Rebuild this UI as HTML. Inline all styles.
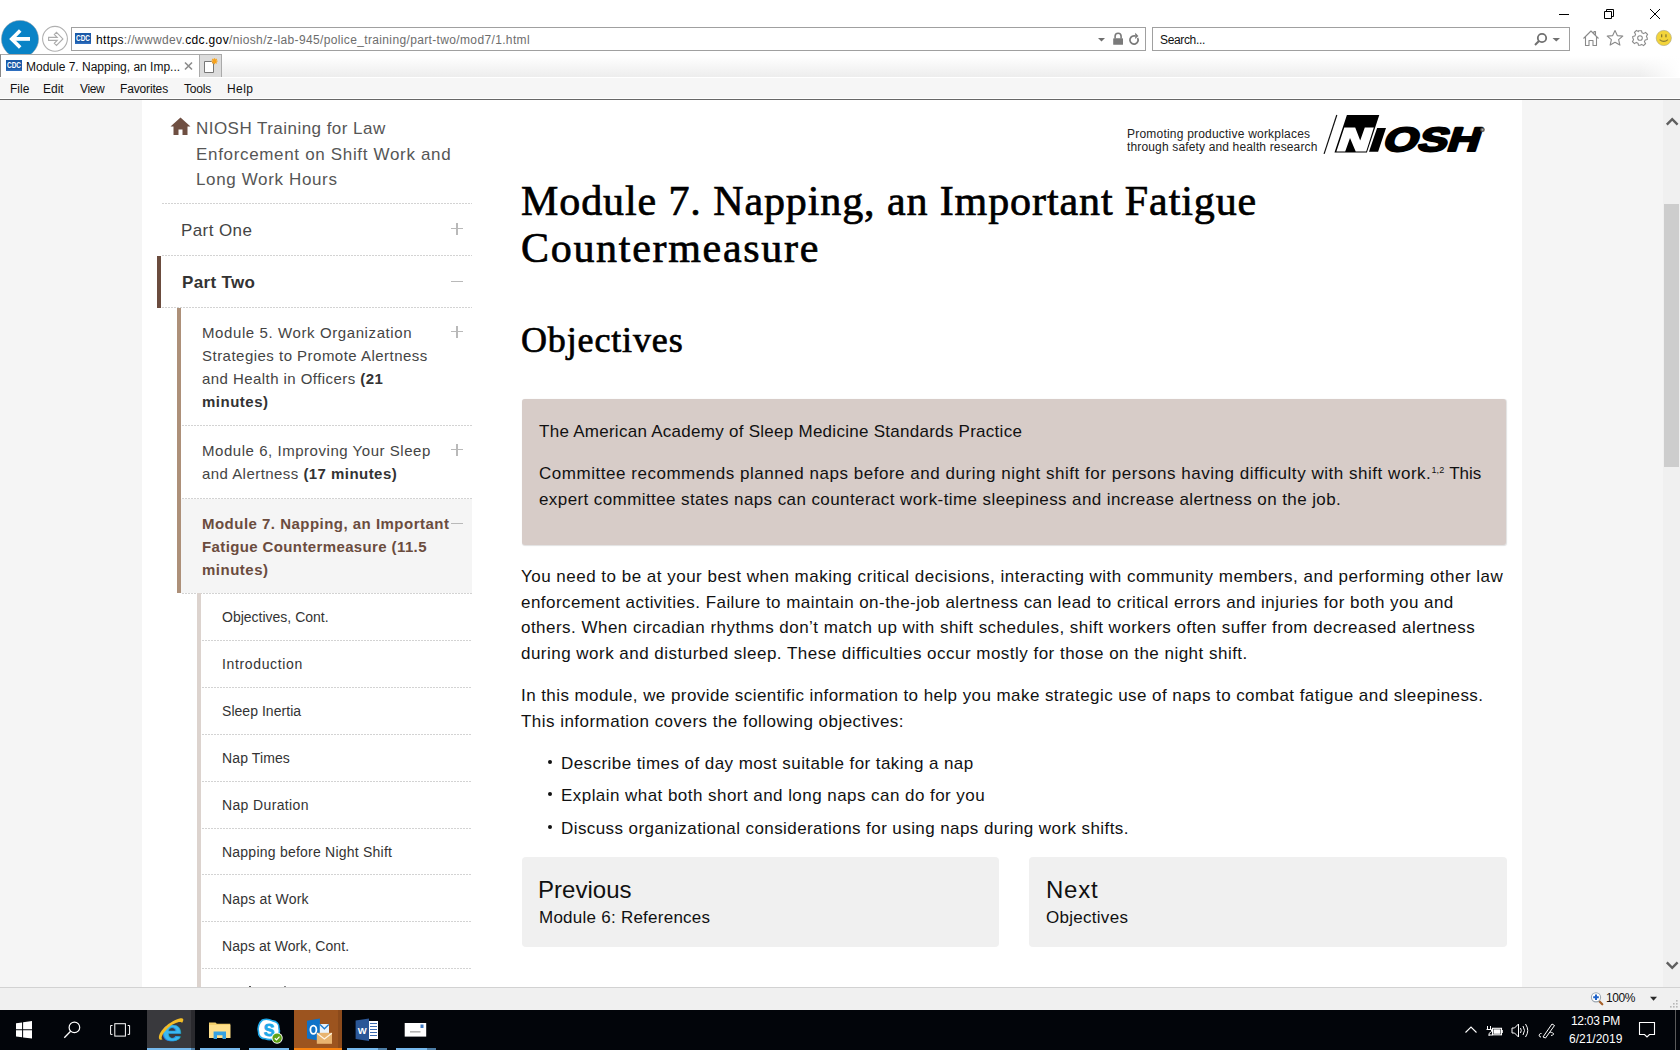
<!DOCTYPE html>
<html><head><meta charset="utf-8">
<style>
*{margin:0;padding:0;box-sizing:border-box}
html,body{width:1680px;height:1050px;overflow:hidden;background:#fff;font-family:"Liberation Sans",sans-serif}
.a{position:absolute}
.nw{white-space:nowrap}
/* chrome */
#top{left:0;top:0;width:1680px;height:55px;background:#fff}
.ui{font-size:12px;color:#000}
#addr{left:71px;top:27px;width:1075px;height:24px;border:1px solid #a0a0a0;background:#fff}
#srch{left:1152px;top:27px;width:418px;height:24px;border:1px solid #a0a0a0;background:#fff}
#tabrow{left:0;top:55px;width:1680px;height:22px;background:linear-gradient(#fff 5%,#ededed)}
#tab{left:0;top:54px;width:200px;height:23px;background:#fff;border:1px solid #aaa;border-bottom:none;border-left-color:#888}
#newtab{left:199px;top:54px;width:23px;height:23px;background:#dcdcdc;border:1px solid #aaa;border-bottom:none}
#menubar{left:0;top:78px;width:1680px;height:20px;background:#f6f6f6}
#menuline{left:0;top:99px;width:1680px;height:1px;background:#676767}
/* page */
#lgray{left:0;top:100px;width:142px;height:887px;background:#f5f5f5}
#rgray{left:1522px;top:100px;width:141px;height:887px;background:#f5f5f5}
#sb{left:1663px;top:100px;width:17px;height:887px;background:#f0f0f0}
#thumb{left:1664px;top:204px;width:15px;height:263px;background:#cdcdcd}
#status{left:0;top:987px;width:1680px;height:23px;background:#f0f0f0;border-top:1px solid #d2d2d2}
#task{left:0;top:1010px;width:1680px;height:40px;background:#02050a}
.t17{font-size:17px;line-height:25.6px}
.t15{font-size:15px;line-height:23px}
.t15 div{height:23px}
.t14{font-size:14px;line-height:20px;color:#333}
.serif{font-family:"Liberation Serif",serif;-webkit-text-stroke:0.7px #000}
.dot{height:1px;background-image:linear-gradient(to right,#d3d3d3 2px,transparent 2px);background-size:3px 1px}
.plus,.minus{width:12px;height:12px}
.plus::before,.minus::before{content:"";position:absolute;left:0;top:5px;width:12px;height:1.3px;background:#b9b9b9}
.plus::after{content:"";position:absolute;left:5.4px;top:0;width:1.3px;height:12px;background:#b9b9b9}
</style></head><body>
<div id="top" class="a"></div>
<div id="addr" class="a"></div>
<div id="srch" class="a"></div>
<div id="tabrow" class="a"></div>
<div class="a" style="left:1640px;top:55px;width:40px;height:22px;background:linear-gradient(to right,rgba(255,255,255,0),#fff)"></div>
<div class="a" style="left:222px;top:77px;width:1458px;height:1px;background:#fff"></div>
<div id="tab" class="a"></div>
<div id="newtab" class="a"></div>
<div id="menubar" class="a"></div>
<div id="menuline" class="a"></div>
<!-- chrome -->
<svg class="a" style="left:0;top:0" width="80" height="54" viewBox="0 0 80 54">
<circle cx="20" cy="39" r="18.6" fill="#0a83c6" stroke="#9aa0a6" stroke-width="0.5"/>
<path d="M13 38.9 H30" stroke="#fff" stroke-width="3.8"/><path d="M20.2 30.4 L11.7 38.9 L20.2 47.4" fill="none" stroke="#fff" stroke-width="3.6" stroke-linejoin="miter" stroke-linecap="butt"/>
<circle cx="55" cy="38.8" r="12.4" fill="#fff" stroke="#b0b0b0" stroke-width="1.1"/>
<path d="M48.6 37.4 H57.2 L54.3 34.5 L56.5 32.3 L62.9 38.9 L56.5 45.5 L54.3 43.3 L57.2 40.4 H48.6 Z" fill="none" stroke="#ababab" stroke-width="1.1" stroke-linejoin="miter"/>
</svg>
<svg class="a" style="left:75px;top:33px" width="17" height="12" viewBox="0 0 17 12"><rect x="0" y="0" width="16" height="11" fill="#1b5aa8"/><rect x="0" y="9.5" width="16" height="1.5" fill="#2f6fbf"/><text x="8" y="8.3" fill="#fff" font-family="Liberation Sans" font-weight="bold" font-size="8.3" text-anchor="middle" textLength="14" lengthAdjust="spacingAndGlyphs">CDC</text></svg>
<div class="a nw ui" style="left:96px;top:32px;line-height:16px;letter-spacing:0.355px;color:#6d6d6d"><span style="color:#000">https</span>://wwwdev.<span style="color:#000">cdc.gov</span>/niosh/z-lab-945/police_training/part-two/mod7/1.html</div>
<svg class="a" style="left:1090px;top:28px" width="56" height="22" viewBox="0 0 56 22">
<path d="M8 10 L15 10 L11.5 13.5 Z" fill="#6e6e6e"/>
<path d="M25.1 10.5 V8.2 A3 3 0 0 1 31.1 8.2 V10.5" fill="none" stroke="#7a7a7a" stroke-width="1.6"/>
<rect x="23.2" y="10.3" width="9.8" height="6.5" rx="0.6" fill="#7a7a7a"/>
<path d="M45 7.9 H44 A4.1 4.1 0 1 0 47.55 9.95" fill="none" stroke="#7a7a7a" stroke-width="1.7"/>
<path d="M45.2 4.7 L48.4 7.9 L45.2 11.1 Z" fill="#7a7a7a"/>
</svg>
<div class="a nw ui" style="left:1160px;top:32px;line-height:16px;letter-spacing:-0.35px;color:#111">Search...</div>
<svg class="a" style="left:1530px;top:28px" width="40" height="22" viewBox="0 0 40 22">
<circle cx="12" cy="10" r="4.2" fill="none" stroke="#707070" stroke-width="1.8"/>
<path d="M9.2 12.8 L5 17" stroke="#707070" stroke-width="2"/>
<path d="M22.5 10 L30 10 L26.3 13.5 Z" fill="#707070"/>
</svg>
<!-- window controls -->
<svg class="a" style="left:1550px;top:0" width="130" height="28" viewBox="0 0 130 28">
<path d="M9 14.5 H19" stroke="#000" stroke-width="1"/>
<path d="M54.5 11.5 H61.5 V18.5 H54.5 Z M56.5 11.5 V9.5 H63.5 V16.5 H61.5" fill="none" stroke="#000" stroke-width="1"/>
<path d="M100 9 L110 19 M110 9 L100 19" stroke="#000" stroke-width="1"/>
</svg>
<svg class="a" style="left:1580px;top:28px" width="100" height="20" viewBox="0 0 100 20">
<path d="M3.5 10.5 L11 3 L18.5 10.5 M5.5 9 V17.5 H9 V12.5 H13 V17.5 H16.5 V9 M14 5.2 V3.5 H15.5 V6.8" fill="none" stroke="#8a8a8a" stroke-width="1.1" stroke-linejoin="round"/>
<path d="M35 2.5 L37.3 7.6 L42.8 8.1 L38.6 11.7 L39.9 17.1 L35 14.3 L30.1 17.1 L31.4 11.7 L27.2 8.1 L32.7 7.6 Z" fill="none" stroke="#8a8a8a" stroke-width="1.1" stroke-linejoin="round"/>
<g transform="translate(60 10)" fill="none" stroke="#8a8a8a" stroke-width="1.1"><circle r="2.3"/><path d="M-1.5 -7.3 H1.5 L2 -5.2 L3.7 -4.4 L5.5 -5.6 L7.6 -3.5 L6.4 -1.7 L7.2 0 L7.3 1.5 L5.2 2 L4.4 3.7 L5.6 5.5 L3.5 7.6 L1.7 6.4 L0 7.2 L-1.5 7.3 L-2 5.2 L-3.7 4.4 L-5.5 5.6 L-7.6 3.5 L-6.4 1.7 L-7.2 0 L-7.3 -1.5 L-5.2 -2 L-4.4 -3.7 L-5.6 -5.5 L-3.5 -7.6 L-1.7 -6.4 Z" stroke-linejoin="round"/></g>
<circle cx="83.8" cy="10" r="7.6" fill="#f3d43b" stroke="#a9a27a" stroke-width="0.6"/>
<rect x="81" y="6.3" width="1.3" height="3" fill="#8a7a30"/><rect x="85.3" y="6.3" width="1.3" height="3" fill="#8a7a30"/>
<path d="M79.6 11.6 Q83.8 15.2 88 11.6" fill="none" stroke="#8a7a30" stroke-width="1.1"/>
</svg>
<!-- tab -->
<svg class="a" style="left:6px;top:60px" width="17" height="12" viewBox="0 0 17 12"><rect x="0" y="0" width="16" height="11" fill="#1b5aa8"/><rect x="0" y="9.5" width="16" height="1.5" fill="#2f6fbf"/><text x="8" y="8.3" fill="#fff" font-family="Liberation Sans" font-weight="bold" font-size="8.3" text-anchor="middle" textLength="14" lengthAdjust="spacingAndGlyphs">CDC</text></svg>
<div class="a nw ui" style="left:26px;top:59px;line-height:16px;color:#111">Module 7. Napping, an Imp...</div>
<svg class="a" style="left:183px;top:61px" width="11" height="10" viewBox="0 0 11 10"><path d="M2 1.5 L9 8.5 M9 1.5 L2 8.5" stroke="#8c8c8c" stroke-width="1.6"/></svg>
<svg class="a" style="left:202px;top:58px" width="18" height="16" viewBox="0 0 18 16">
<path d="M2.5 3.5 H9.5 L11.5 5.5 V14.5 H2.5 Z" fill="#fff" stroke="#777" stroke-width="1"/>
<g transform="translate(12.5 3.2)" stroke="#f7a21b" stroke-width="1.3"><path d="M-3 0 H3 M0 -3 V3 M-2.2 -2.2 L2.2 2.2 M2.2 -2.2 L-2.2 2.2"/></g>
</svg>
<!-- menu -->
<div class="a nw ui" style="left:10px;top:81px;line-height:16px;color:#111">File</div>
<div class="a nw ui" style="left:43px;top:81px;line-height:16px;color:#111">Edit</div>
<div class="a nw ui" style="left:80px;top:81px;line-height:16px;color:#111;letter-spacing:-0.35px">View</div>
<div class="a nw ui" style="left:120px;top:81px;line-height:16px;color:#111;letter-spacing:-0.15px">Favorites</div>
<div class="a nw ui" style="left:184px;top:81px;line-height:16px;color:#111;letter-spacing:-0.17px">Tools</div>
<div class="a nw ui" style="left:227px;top:81px;line-height:16px;color:#111;letter-spacing:0.4px">Help</div>

<div id="lgray" class="a"></div>
<div id="rgray" class="a"></div>
<div id="sb" class="a"></div>
<div id="thumb" class="a"></div>
<div id="status" class="a"></div>
<div id="task" class="a"></div>
<!-- sidebar -->
<svg class="a" style="left:170px;top:117px" width="21" height="19" viewBox="0 0 21 19"><path d="M10.5 0.5 L20.5 9.5 L17.5 9.5 L17.5 18 L12.5 18 L12.5 12.5 L8.5 12.5 L8.5 18 L3.5 18 L3.5 9.5 L0.5 9.5 Z" fill="#6f4f42"/></svg>
<div class="a nw side t17" style="left:196px;top:116px;color:#565656"><span style="letter-spacing:0.46px">NIOSH Training for Law</span></div>
<div class="a nw side t17" style="left:196px;top:142px;color:#565656"><span style="letter-spacing:0.67px">Enforcement on Shift Work and</span></div>
<div class="a nw side t17" style="left:196px;top:167px;color:#565656"><span style="letter-spacing:0.64px">Long Work Hours</span></div>
<div class="a dot" style="left:162px;top:203px;width:310px"></div>
<div class="a nw t17" style="left:181px;top:218px;color:#444;letter-spacing:0.41px">Part One</div>
<div class="a plus" style="left:451px;top:223px"></div>
<div class="a dot" style="left:162px;top:255px;width:310px"></div>
<div class="a" style="left:157px;top:256px;width:4px;height:52px;background:#6b4c3e"></div>
<div class="a nw t17" style="left:182px;top:270px;color:#333;font-weight:bold;letter-spacing:0.34px">Part Two</div>
<div class="a minus" style="left:451px;top:276px"></div>
<div class="a dot" style="left:162px;top:307px;width:310px"></div>
<div class="a" style="left:177px;top:308px;width:4px;height:285px;background:#ad9079"></div>
<div class="a t15" style="left:202px;top:321px;color:#444">
<div class="nw" style="letter-spacing:0.6px">Module 5. Work Organization</div>
<div class="nw" style="letter-spacing:0.48px">Strategies to Promote Alertness</div>
<div class="nw" style="letter-spacing:0.44px">and Health in Officers <b style="color:#333">(21</b></div>
<div class="nw" style="letter-spacing:0.5px"><b style="color:#333">minutes)</b></div>
</div>
<div class="a plus" style="left:451px;top:326px"></div>
<div class="a dot" style="left:182px;top:425px;width:290px"></div>
<div class="a t15" style="left:202px;top:439px;color:#444">
<div class="nw" style="letter-spacing:0.54px">Module 6, Improving Your Sleep</div>
<div class="nw" style="letter-spacing:0.45px">and Alertness <b style="color:#333">(17 minutes)</b></div>
</div>
<div class="a plus" style="left:451px;top:444px"></div>
<div class="a dot" style="left:182px;top:498px;width:290px"></div>
<div class="a" style="left:181px;top:499px;width:291px;height:94px;background:#f5f5f5"></div>
<div class="a t15" style="left:202px;top:512px;color:#6b4c3e;font-weight:bold">
<div class="nw" style="letter-spacing:0.48px">Module 7. Napping, an Important</div>
<div class="nw" style="letter-spacing:0.38px">Fatigue Countermeasure (11.5</div>
<div class="nw" style="letter-spacing:0.5px">minutes)</div>
</div>
<div class="a minus" style="left:451px;top:518px"></div>
<div class="a dot" style="left:182px;top:593px;width:290px"></div>
<div class="a" style="left:197px;top:593px;width:4px;height:394px;background:#dcd3ce"></div>
<div class="a nw t14" style="left:222px;top:607px;letter-spacing:0px">Objectives, Cont.</div>
<div class="a dot" style="left:202px;top:640px;width:270px"></div>
<div class="a nw t14" style="left:222px;top:654px;letter-spacing:0.64px">Introduction</div>
<div class="a dot" style="left:202px;top:687px;width:270px"></div>
<div class="a nw t14" style="left:222px;top:701px;letter-spacing:0.04px">Sleep Inertia</div>
<div class="a dot" style="left:202px;top:734px;width:270px"></div>
<div class="a nw t14" style="left:222px;top:748px;letter-spacing:0.12px">Nap Times</div>
<div class="a dot" style="left:202px;top:781px;width:270px"></div>
<div class="a nw t14" style="left:222px;top:795px;letter-spacing:0.36px">Nap Duration</div>
<div class="a dot" style="left:202px;top:828px;width:270px"></div>
<div class="a nw t14" style="left:222px;top:842px;letter-spacing:0.23px">Napping before Night Shift</div>
<div class="a dot" style="left:202px;top:874px;width:270px"></div>
<div class="a nw t14" style="left:222px;top:889px;letter-spacing:0.18px">Naps at Work</div>
<div class="a dot" style="left:202px;top:921px;width:270px"></div>
<div class="a nw t14" style="left:222px;top:936px;letter-spacing:0.07px">Naps at Work, Cont.</div>
<div class="a dot" style="left:202px;top:968px;width:270px"></div>
<!-- main -->
<div class="a nw serif" style="left:521px;top:178px;font-size:42px;line-height:47px;color:#000">
<div style="letter-spacing:0.9px">Module 7. Napping, an Important Fatigue</div>
<div style="letter-spacing:1.7px">Countermeasure</div>
</div>
<div class="a nw serif" style="left:521px;top:320px;font-size:36px;line-height:40px;color:#000;letter-spacing:0.86px">Objectives</div>
<div class="a" style="left:522px;top:399px;width:984px;height:146px;background:#d7ccc8;border-radius:3px;box-shadow:0.5px 0.5px 1px rgba(0,0,0,0.12)"></div>
<div class="a nw t17" style="left:539px;top:419px;color:#111;letter-spacing:0.27px">The American Academy of Sleep Medicine Standards Practice</div>
<div class="a nw t17" style="left:539px;top:461px;color:#111;letter-spacing:0.53px">Committee recommends planned naps before and during night shift for persons having difficulty with shift work.<sup style="font-size:9px;vertical-align:0;position:relative;top:-6px;letter-spacing:0.2px">1,2</sup><span style="letter-spacing:0">&nbsp;This</span></div>
<div class="a nw t17" style="left:539px;top:487px;color:#111;letter-spacing:0.41px">expert committee states naps can counteract work-time sleepiness and increase alertness on the job.</div>
<div class="a nw t17" style="left:521px;top:564px;color:#111;letter-spacing:0.49px">You need to be at your best when making critical decisions, interacting with community members, and performing other law</div>
<div class="a nw t17" style="left:521px;top:590px;color:#111;letter-spacing:0.45px">enforcement activities. Failure to maintain on-the-job alertness can lead to critical errors and injuries for both you and</div>
<div class="a nw t17" style="left:521px;top:615px;color:#111;letter-spacing:0.47px">others. When circadian rhythms don’t match up with shift schedules, shift workers often suffer from decreased alertness</div>
<div class="a nw t17" style="left:521px;top:641px;color:#111;letter-spacing:0.48px">during work and disturbed sleep. These difficulties occur mostly for those on the night shift.</div>
<div class="a nw t17" style="left:521px;top:683px;color:#111;letter-spacing:0.43px">In this module, we provide scientific information to help you make strategic use of naps to combat fatigue and sleepiness.</div>
<div class="a nw t17" style="left:521px;top:709px;color:#111;letter-spacing:0.47px">This information covers the following objectives:</div>
<div class="a" style="left:548px;top:760px;width:4px;height:4px;border-radius:2px;background:#111"></div>
<div class="a nw t17" style="left:561px;top:751px;color:#111;letter-spacing:0.43px">Describe times of day most suitable for taking a nap</div>
<div class="a" style="left:548px;top:792px;width:4px;height:4px;border-radius:2px;background:#111"></div>
<div class="a nw t17" style="left:561px;top:783px;color:#111;letter-spacing:0.45px">Explain what both short and long naps can do for you</div>
<div class="a" style="left:548px;top:825px;width:4px;height:4px;border-radius:2px;background:#111"></div>
<div class="a nw t17" style="left:561px;top:816px;color:#111;letter-spacing:0.42px">Discuss organizational considerations for using naps during work shifts.</div>
<div class="a" style="left:522px;top:857px;width:477px;height:90px;background:#f0f0f0;border-radius:4px"></div>
<div class="a" style="left:1029px;top:857px;width:478px;height:90px;background:#f0f0f0;border-radius:4px"></div>
<div class="a nw" style="left:538px;top:875px;font-size:24px;line-height:30px;color:#111;letter-spacing:0.03px">Previous</div>
<div class="a nw t17" style="left:539px;top:905px;color:#111;letter-spacing:0.25px">Module 6: References</div>
<div class="a nw" style="left:1046px;top:875px;font-size:24px;line-height:30px;color:#111;letter-spacing:0.77px">Next</div>
<div class="a nw t17" style="left:1046px;top:905px;color:#111;letter-spacing:0.28px">Objectives</div>

<!-- scrollbar arrows -->
<svg class="a" style="left:1662px;top:110px" width="18" height="20" viewBox="0 0 18 20"><path d="M4.8 14.6 L10.2 9.2 L15.6 14.6" fill="none" stroke="#5f5f5f" stroke-width="2.4"/></svg>
<svg class="a" style="left:1662px;top:955px" width="18" height="20" viewBox="0 0 18 20"><path d="M4.8 7.4 L10.2 12.8 L15.6 7.4" fill="none" stroke="#5f5f5f" stroke-width="2.4"/></svg>
<!-- status bar -->
<svg class="a" style="left:1588px;top:990px" width="92" height="20" viewBox="0 0 92 20">
<path d="M11 11 L14.3 14.3" stroke="#a5602a" stroke-width="2.2" stroke-linecap="round"/>
<circle cx="8" cy="7.3" r="4.6" fill="#fff" stroke="#9aa6b0" stroke-width="1.1"/>
<path d="M5.2 7.3 H10.8 M8 4.5 V10.1" stroke="#1f63c9" stroke-width="2"/>
<path d="M62 6.8 L69 6.8 L65.5 10.8 Z" fill="#2a2a2a"/>
<g fill="#b8b8b8" transform="translate(4 0)"><rect x="84" y="10" width="1.6" height="1.6"/><rect x="81" y="13" width="1.6" height="1.6"/><rect x="84" y="13" width="1.6" height="1.6"/><rect x="78" y="16" width="1.6" height="1.6"/><rect x="81" y="16" width="1.6" height="1.6"/><rect x="84" y="16" width="1.6" height="1.6"/></g>
</svg>
<div class="a nw ui" style="left:1606px;top:991px;line-height:14px;color:#111;letter-spacing:-0.45px">100%</div>
<!-- taskbar -->
<svg class="a" style="left:0;top:1010px" width="440" height="40" viewBox="0 0 440 40">
<path d="M16 13.2 L22.1 12.4 V19.3 H16 Z M23.1 12.2 L32 11 V19.3 H23.1 Z M16 20.3 H22.1 V27.3 L16 26.5 Z M23.1 20.3 H32 V28.5 L23.1 27.4 Z" fill="#fff"/>
<circle cx="74.4" cy="17.4" r="5.3" fill="none" stroke="#fff" stroke-width="1.2"/>
<path d="M70.6 21.3 L64.3 27.7" stroke="#fff" stroke-width="1.3"/>
<rect x="114.8" y="13.7" width="10.6" height="12.4" fill="none" stroke="#fff" stroke-width="1"/>
<path d="M112.5 15.5 H110.6 V24.4 H112.5 M127.7 15.5 H129.6 V24.4 H127.7" fill="none" stroke="#fff" stroke-width="1"/>
<rect x="147" y="0" width="44" height="40" fill="#39393d"/>
<rect x="191" y="0" width="4" height="40" fill="#2a2a2e"/>
<rect x="147" y="38" width="44" height="2" fill="#76b9ed"/><rect x="191" y="38" width="4" height="2" fill="#4d7ea6"/>
<text x="172" y="30.8" fill="#3cb8f0" stroke="#1d9be0" stroke-width="0.6" font-family="Liberation Sans" font-weight="bold" font-size="29" text-anchor="middle" textLength="20" lengthAdjust="spacingAndGlyphs">e</text>
<path d="M160 29.8 C155.5 26 166 12 180.5 8.3 C184.5 7.5 183.5 11 182 13 C181.5 10.8 174 12 167 19 C162 24.5 160.5 28 162.5 29.5 Z" fill="#f2bc27"/>
<path d="M209 12.5 H215.5 L216.8 13.8 H230.3 V28 H209 Z" fill="#f3cf6b"/>
<rect x="209" y="15" width="21.3" height="13" fill="#ffe08c"/>
<path d="M213.6 21.5 H226 V29 H222.5 V25.2 H217 V29 H213.6 Z" fill="#36a2e2"/>
<rect x="200" y="38" width="40" height="2" fill="#76b9ed"/>
<path d="M262.4 10 C266 8.6 269.6 9.3 272.6 10.9 C276.6 11.3 279.4 14.3 279 18.6 C280.4 22 278.6 26.3 275.6 27.8 C272 30.2 268 29.8 265.2 28.8 C261.3 28.8 258.1 25.8 258.5 21.9 C257.2 18.1 259 12.6 262.4 10 Z" fill="#fff" stroke="#1ea7e8" stroke-width="1.6"/>
<text x="269" y="25.5" fill="#1ea7e8" stroke="#1ea7e8" stroke-width="0.8" font-family="Liberation Sans" font-weight="bold" font-size="16" text-anchor="middle">S</text>
<circle cx="277.1" cy="28.1" r="5.6" fill="#fff"/><circle cx="277.1" cy="28.1" r="4.7" fill="#5fa217"/>
<path d="M274.8 28.3 L276.5 29.9 L279.5 26.6" fill="none" stroke="#fff" stroke-width="1.2"/>
<rect x="249" y="38" width="40" height="2" fill="#76b9ed"/>
<rect x="294" y="0" width="44" height="40" fill="#9c541f"/>
<rect x="338" y="0" width="4" height="40" fill="#8b4a1b"/>
<rect x="294" y="38" width="48" height="2" fill="#f7820f"/>
<path d="M307 10.8 L319.9 8.5 V30.8 L307 28.6 Z" fill="#0f72c8"/>
<ellipse cx="313.4" cy="19.7" rx="3" ry="4.1" fill="none" stroke="#fff" stroke-width="1.8"/>
<rect x="319.8" y="14" width="9.2" height="10" fill="#eaf3fb"/>
<path d="M320 14.5 L324.4 18.8 L328.8 14.5" fill="none" stroke="#1a7bd0" stroke-width="1.2"/>
<rect x="316.8" y="22.8" width="15.2" height="11" fill="#e8b470"/>
<path d="M317 23.2 L324.4 29 L331.8 23.2" fill="none" stroke="#fff5e6" stroke-width="1.2"/>
<path d="M355.6 10.5 L369 8.6 V31 L355.6 29 Z" fill="#2b5797"/>
<rect x="369" y="11" width="9" height="18" fill="#fff"/>
<g fill="#3d6bb0"><rect x="370" y="13" width="7" height="1"/><rect x="370" y="16" width="7" height="1"/><rect x="370" y="19" width="7" height="1"/><rect x="370" y="22" width="7" height="1"/><rect x="370" y="25" width="7" height="1"/></g>
<text x="362.3" y="24.3" fill="#fff" font-family="Liberation Sans" font-weight="bold" font-size="9.5" text-anchor="middle">W</text>
<rect x="347" y="38" width="31" height="2" fill="#76b9ed"/><rect x="378" y="38" width="9" height="2" fill="#4d7ea6"/>
<rect x="404.7" y="13" width="21.5" height="13.6" fill="#fff"/>
<rect x="420.5" y="14.5" width="3" height="3.5" fill="#3d78c2"/>
<rect x="410" y="21" width="10.5" height="1.6" fill="#b5b5b5"/>
<rect x="396" y="38" width="31" height="2" fill="#76b9ed"/><rect x="427" y="38" width="9" height="2" fill="#4d7ea6"/>
</svg>
<svg class="a" style="left:1455px;top:1010px" width="225" height="40" viewBox="0 0 225 40">
<path d="M10.5 22.5 L16 17 L21.5 22.5" fill="none" stroke="#fff" stroke-width="1.1"/>
<path d="M32.5 16 V19.5 M35.5 16 V19.5 M31.5 19.5 H36.5 V21.5 L34 23.5 V26 M34 25 H37.5" fill="none" stroke="#fff" stroke-width="1"/>
<rect x="37.5" y="18.3" width="9" height="6.5" fill="none" stroke="#fff" stroke-width="1.1"/><rect x="46.5" y="20" width="1.3" height="3" fill="#fff"/><rect x="38.5" y="19.3" width="7" height="4.5" fill="#fff"/>
<path d="M57 18 H59.5 L63.5 14 V27 L59.5 23 H57 Z" fill="none" stroke="#fff" stroke-width="1"/>
<path d="M65.5 18 Q67 20.5 65.5 23 M68 16 Q71 20.5 68 25 M70.5 14 Q75 20.5 70.5 27" fill="none" stroke="#fff" stroke-width="1"/>
<path d="M86 27 C83 27 84 23 86.5 23.5 M88 27 L97 14 L99.5 15.5 L90.5 28 Z M95 22 C99 23 100.5 24.5 96 25.5" fill="none" stroke="#fff" stroke-width="1"/>
<path d="M184.5 12.5 H199.5 V24.5 H194.5 L192 27 L189.5 24.5 H184.5 Z" fill="none" stroke="#fff" stroke-width="1.1"/>
<rect x="220" y="0" width="1" height="40" fill="#5a5a5a"/>
</svg>
<div class="a nw ui" style="left:1571px;top:1014px;line-height:14px;color:#fff;letter-spacing:-0.3px">12:03 PM</div>
<div class="a nw ui" style="left:1569px;top:1032px;line-height:14px;color:#fff">6/21/2019</div>
<!-- NIOSH logo -->
<div class="a nw" style="left:1127px;top:128px;font-size:12px;line-height:13px;color:#222;letter-spacing:0.21px">Promoting productive workplaces</div>
<div class="a nw" style="left:1127px;top:141px;font-size:12px;line-height:13px;color:#222;letter-spacing:0.15px">through safety and health research</div>
<svg class="a" style="left:1320px;top:110px" width="175" height="48" viewBox="0 0 175 48">
<path d="M16.8 5 L4.1 43.9" stroke="#111" stroke-width="1.2"/>
<path d="M26.9 5 H59.3 L46.9 42.6 H14.5 Z M24.3 17.6 L16.4 41.4 H25.2 L30 28.1 L35.7 41.4 H46.2 L53.8 17.6 H44.8 L40.2 30.5 L35.2 17.6 Z" fill="#000" fill-rule="evenodd"/>
<path d="M57.1 18.1 H66 L58.1 41.7 H49 Z" fill="#000"/>
<g transform="translate(61.5 41.2) skewX(-18)"><text x="0" y="0" font-family="Liberation Sans" font-weight="bold" font-size="33.5" fill="#000" stroke="#000" stroke-width="2.2" stroke-linejoin="round" textLength="96" lengthAdjust="spacingAndGlyphs">OSH</text></g>
<circle cx="162.5" cy="19.7" r="2.3" fill="#555"/><circle cx="162.5" cy="19.7" r="1" fill="#aaa"/>
</svg>
<!-- partial next sidebar item -->
<div class="a" style="left:249px;top:986px;width:2px;height:1px;background:#555"></div>
<div class="a" style="left:284px;top:986px;width:2px;height:1px;background:#888"></div>

<!--CONTENT-->
</body></html>
